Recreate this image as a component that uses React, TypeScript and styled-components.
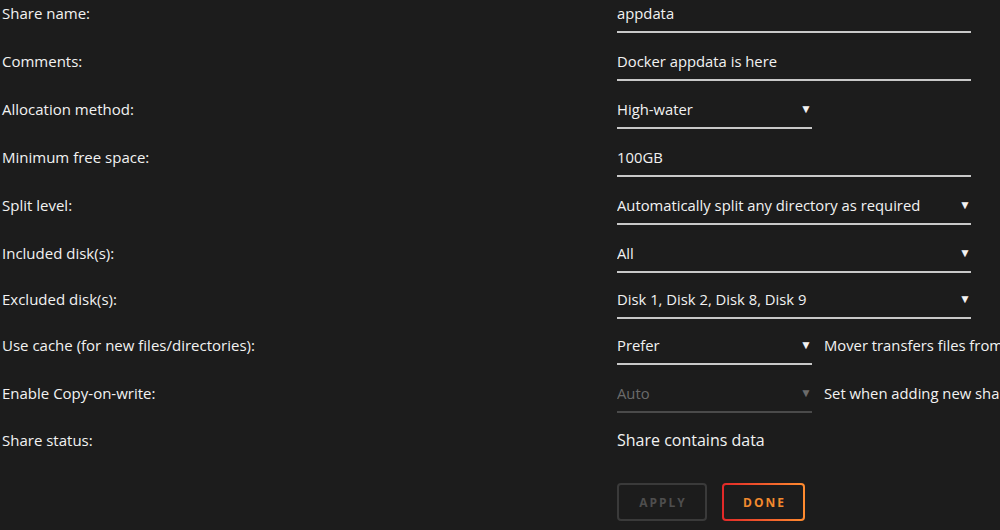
import React from "react";
import styled, { createGlobalStyle } from "styled-components";

const Global = createGlobalStyle`
  html, body { margin: 0; padding: 0; background: #1c1c1c; }
  body { font-family: "Open Sans", "Noto Sans", sans-serif; color: #f2f2f2; }
  * { box-sizing: border-box; }
`;

const Page = styled.div`
  width: 1000px;
  height: 530px;
  overflow: hidden;
  background: #1c1c1c;
  padding-left: 2px;
`;

const Form = styled.div`
  display: grid;
  grid-template-columns: 615px 1fr;
`;

const Label = styled.div<{ $h: number }>`
  height: ${(p) => p.$h}px;
  padding-top: 3px;
  font-size: 15px;
  line-height: 20px;
  color: #f2f2f2;
  white-space: nowrap;
`;

const Cell = styled.div<{ $h: number }>`
  height: ${(p) => p.$h}px;
  display: flex;
  align-items: flex-start;
  gap: 12px;
  white-space: nowrap;
  overflow: hidden;
`;

const Field = styled.div<{ $w: number; $disabled?: boolean }>`
  width: ${(p) => p.$w}px;
  height: 33px;
  padding-top: 3px;
  display: flex;
  justify-content: space-between;
  align-items: flex-start;
  font-size: 14.8px;
  line-height: 20px;
  color: ${(p) => (p.$disabled ? "#6b6b6b" : "#f2f2f2")};
  border-bottom: 2px solid ${(p) => (p.$disabled ? "#4a4a4a" : "#c8c8c8")};
  flex: none;
`;

const Arrow = styled.span<{ $disabled?: boolean }>`
  font-size: 12px;
  line-height: 20px;
  color: ${(p) => (p.$disabled ? "#6b6b6b" : "#f2f2f2")};
`;

const Note = styled.span`
  font-size: 14.8px;
  line-height: 20px;
  padding-top: 3px;
  color: #f2f2f2;
`;

const Status = styled.div`
  padding-top: 2px;
  font-size: 16px;
  line-height: 22px;
  color: #f2f2f2;
`;

const Buttons = styled.div`
  display: flex;
  gap: 15px;
`;

const Button = styled.button<{ $primary?: boolean; $w: number }>`
  width: ${(p) => p.$w}px;
  height: 38px;
  border-radius: 4px;
  border: 2px solid ${(p) => (p.$primary ? "transparent" : "#3a3a3a")};
  background: ${(p) =>
    p.$primary
      ? "linear-gradient(#1c1c1c, #1c1c1c) padding-box, linear-gradient(90deg, #e22828, #ff8c2f) border-box"
      : "transparent"};
  color: ${(p) => (p.$primary ? "#f28a2e" : "#4e4e4e")};
  font-family: "Open Sans", sans-serif;
  font-weight: 700;
  font-size: 12px;
  letter-spacing: 2px;
  padding: 0 0 0 2px;
  cursor: pointer;
`;

type Row = {
  label: string;
  h: number;
  value: string;
  w: number;
  select?: boolean;
  disabled?: boolean;
  note?: string;
};

const rows: Row[] = [
  { label: "Share name:", h: 48, value: "appdata", w: 354 },
  { label: "Comments:", h: 48, value: "Docker appdata is here", w: 354 },
  { label: "Allocation method:", h: 48, value: "High-water", w: 195, select: true },
  { label: "Minimum free space:", h: 48, value: "100GB", w: 354 },
  { label: "Split level:", h: 48, value: "Automatically split any directory as required", w: 354, select: true },
  { label: "Included disk(s):", h: 46, value: "All", w: 354, select: true },
  { label: "Excluded disk(s):", h: 46, value: "Disk 1, Disk 2, Disk 8, Disk 9", w: 354, select: true },
  { label: "Use cache (for new files/directories):", h: 48, value: "Prefer", w: 195, select: true, note: "Mover transfers files from array to cache pool" },
  { label: "Enable Copy-on-write:", h: 47, value: "Auto", w: 195, select: true, disabled: true, note: "Set when adding new share only" },
];

export default function App() {
  return (
    <Page>
      <Global />
      <Form>
        {rows.map((r) => (
          <React.Fragment key={r.label}>
            <Label $h={r.h}>{r.label}</Label>
            <Cell $h={r.h}>
              <Field $w={r.w} $disabled={r.disabled}>
                <span>{r.value}</span>
                {r.select && <Arrow $disabled={r.disabled}>▼</Arrow>}
              </Field>
              {r.note && <Note>{r.note}</Note>}
            </Cell>
          </React.Fragment>
        ))}
        <Label $h={56}>Share status:</Label>
        <Cell $h={56}>
          <Status>Share contains data</Status>
        </Cell>
        <div />
        <Buttons>
          <Button $w={90}>APPLY</Button>
          <Button $w={83} $primary>DONE</Button>
        </Buttons>
      </Form>
    </Page>
  );
}
